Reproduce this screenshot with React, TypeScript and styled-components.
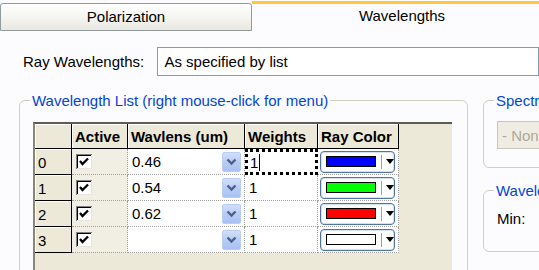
import React from "react";
import styled, { createGlobalStyle } from "styled-components";

const GlobalStyle = createGlobalStyle`
  body {
    margin: 0;
    background: #fcfcfe;
    font-family: "Liberation Sans", Arial, sans-serif;
  }
`;

const Window = styled.div`
  width: 539px;
  height: 270px;
  overflow: hidden;
  background: #fcfcfe;
  color: #000;
  font-size: 15px;
`;

const TabBar = styled.div`
  display: flex;
  height: 31px;
  padding-top: 1px;
  box-sizing: border-box;
`;

const Tab = styled.div<{ $active?: boolean }>`
  box-sizing: border-box;
  text-align: center;
  ${(p) =>
    p.$active
      ? `
    flex: 0 0 300px;
    height: 30px;
    border-top: 3px solid #ffc83c;
    background: #fcfcfe;
    padding-top: 3px;
  `
      : `
    flex: 0 0 252px;
    margin-top: 2px;
    height: 28px;
    border: 1px solid #919b9c;
    border-radius: 3px 3px 0 0;
    background: linear-gradient(#ffffff, #f3f3ef 60%, #e8e7e1);
    line-height: 26px;
  `}
`;

const FieldRow = styled.div`
  display: flex;
  align-items: center;
  margin-top: 16px;
  padding-left: 23px;
`;

const Label = styled.div`
  width: 141px;
`;

const TextBox = styled.div`
  box-sizing: border-box;
  width: 400px;
  height: 29px;
  border: 1px solid #7f9db9;
  background: #fff;
  padding-left: 6px;
  display: flex;
  align-items: center;
`;

const Content = styled.div`
  display: flex;
  gap: 15px;
  margin-top: 16px;
  padding-left: 19px;
`;

const GroupBox = styled.fieldset<{ $w: number; $h: number }>`
  box-sizing: border-box;
  margin: 0;
  padding: 0;
  width: ${(p) => p.$w}px;
  height: ${(p) => p.$h}px;
  border: 1px solid #d0d0bf;
  border-radius: 6px;
  flex-shrink: 0;
`;

const Legend = styled.legend`
  margin-left: 10px;
  padding: 0 2px;
  color: #0046d5;
  font-size: 15px;
  line-height: 17px;
  white-space: nowrap;
`;

const RightColumn = styled.div`
  display: flex;
  flex-direction: column;
  gap: 14px;
`;

const Grid = styled.div`
  box-sizing: border-box;
  margin: 13px 0 0 13px;
  width: 419px;
  height: 170px;
  background: #ece9d8;
  border-top: 2px solid #5f5d52;
  border-left: 2px solid #8a8778;
`;

const Table = styled.div`
  display: grid;
  grid-template-columns: 37px 56px 117px 73px 81px;
  grid-template-rows: 25px repeat(4, 26px);
`;

const HeadCell = styled.div<{ $bold?: boolean }>`
  box-sizing: border-box;
  background: #ece9d8;
  box-shadow: inset -1px -1px 0 #000, inset 1px 1px 0 #fff;
  display: flex;
  align-items: center;
  padding-left: 3px;
  font-weight: ${(p) => (p.$bold ? "bold" : "normal")};
`;

const Cell = styled.div<{ $bg?: string; $focus?: boolean }>`
  box-sizing: border-box;
  background: ${(p) => p.$bg || "#fff"};
  border-right: 1px dotted #a0a0a0;
  border-bottom: 1px dotted #a0a0a0;
  display: flex;
  align-items: center;
  padding: 0 3px 0 4px;
  ${(p) => (p.$focus ? "border: 3px dotted #000; padding-left: 2px;" : "")}
`;

const ValueRow = styled.div`
  flex: 1;
  display: flex;
  align-items: center;
  justify-content: space-between;
`;

const DropButton = styled.div`
  box-sizing: border-box;
  width: 19px;
  height: 20px;
  border: 1px solid #bccdf2;
  border-radius: 2px;
  background: linear-gradient(#d2defc, #b6cbf8 55%, #a9c0f3);
  display: flex;
  align-items: center;
  justify-content: center;
`;

const Caret = styled.span`
  display: inline-block;
  width: 1px;
  height: 17px;
  background: #000;
  margin-left: 1px;
`;

const ColorCombo = styled.div`
  box-sizing: border-box;
  width: 78px;
  height: 22px;
  margin-left: -2px;
  border: 1px solid #4f74a0;
  border-radius: 4px;
  box-shadow: inset 0 0 0 1px #d6e2f2;
  background: #fff;
  display: flex;
  align-items: center;
  padding-left: 5px;
`;

const Swatch = styled.div<{ $color: string }>`
  box-sizing: border-box;
  width: 50px;
  height: 11px;
  border: 1px solid #000;
  background: ${(p) => p.$color};
`;

const ComboDivider = styled.div`
  width: 1px;
  height: 14px;
  background: #a0a0a0;
  margin-left: 5px;
`;

const Arrow = styled.div`
  width: 0;
  height: 0;
  margin-left: 4px;
  border-left: 4px solid transparent;
  border-right: 4px solid transparent;
  border-top: 5px solid #000;
`;

const DisabledCombo = styled.div`
  box-sizing: border-box;
  margin: 12px 0 0 13px;
  width: 120px;
  height: 28px;
  border: 1px solid #c9c7ba;
  background: #efede3;
  color: #aca899;
  display: flex;
  align-items: center;
  padding-left: 4px;
  white-space: nowrap;
`;

const SmallLabel = styled.div`
  margin: 11px 0 0 13px;
`;

const CheckBox = () => (
  <svg width="16" height="15" viewBox="0 0 16 15" style={{ display: "block" }}>
    <rect x="0" y="0" width="16" height="15" fill="#fff" />
    <path d="M0 0H16V1H1V15H0Z" fill="#808080" />
    <path d="M1 1H15V2H2V15H1Z" fill="#000" />
    <path d="M15 1H16V15H1V14H15Z" fill="#e8e6dc" />
    <path d="M4 7L6.5 10L12 4.5" fill="none" stroke="#000" strokeWidth="2.3" />
  </svg>
);

const Chevron = () => (
  <svg width="11" height="8" viewBox="0 0 11 8">
    <path d="M1.5 1.5L5.5 5.5L9.5 1.5" fill="none" stroke="#4d6185" strokeWidth="2.4" />
  </svg>
);

const rows = [
  { id: "0", wave: "0.46", color: "#0000ff" },
  { id: "1", wave: "0.54", color: "#00ff00" },
  { id: "2", wave: "0.62", color: "#ff0000" },
  { id: "3", wave: "", color: "#ffffff" },
];

export default function App() {
  return (
    <Window>
      <GlobalStyle />
      <TabBar>
        <Tab>Polarization</Tab>
        <Tab $active>Wavelengths</Tab>
      </TabBar>
      <FieldRow>
        <Label>Ray Wavelengths:</Label>
        <TextBox>As specified by list</TextBox>
      </FieldRow>
      <Content>
        <GroupBox $w={449} $h={220}>
          <Legend>Wavelength List (right mouse-click for menu)</Legend>
          <Grid>
            <Table>
              <HeadCell />
              <HeadCell $bold>Active</HeadCell>
              <HeadCell $bold>Wavlens (um)</HeadCell>
              <HeadCell $bold>Weights</HeadCell>
              <HeadCell $bold>Ray Color</HeadCell>
              {rows.map((r, i) => (
                <React.Fragment key={r.id}>
                  <HeadCell>{r.id}</HeadCell>
                  <Cell $bg="#f1efe4">
                    <CheckBox />
                  </Cell>
                  <Cell>
                    <ValueRow>
                      <span>{r.wave}</span>
                      <DropButton>
                        <Chevron />
                      </DropButton>
                    </ValueRow>
                  </Cell>
                  <Cell $focus={i === 0}>
                    1{i === 0 && <Caret />}
                  </Cell>
                  <Cell>
                    <ColorCombo>
                      <Swatch $color={r.color} />
                      <ComboDivider />
                      <Arrow />
                    </ColorCombo>
                  </Cell>
                </React.Fragment>
              ))}
            </Table>
          </Grid>
        </GroupBox>
        <RightColumn>
          <GroupBox $w={140} $h={76}>
            <Legend>Spectrum</Legend>
            <DisabledCombo>- None -</DisabledCombo>
          </GroupBox>
          <GroupBox $w={140} $h={70}>
            <Legend>Wavelength Range</Legend>
            <SmallLabel>Min:</SmallLabel>
          </GroupBox>
        </RightColumn>
      </Content>
    </Window>
  );
}
